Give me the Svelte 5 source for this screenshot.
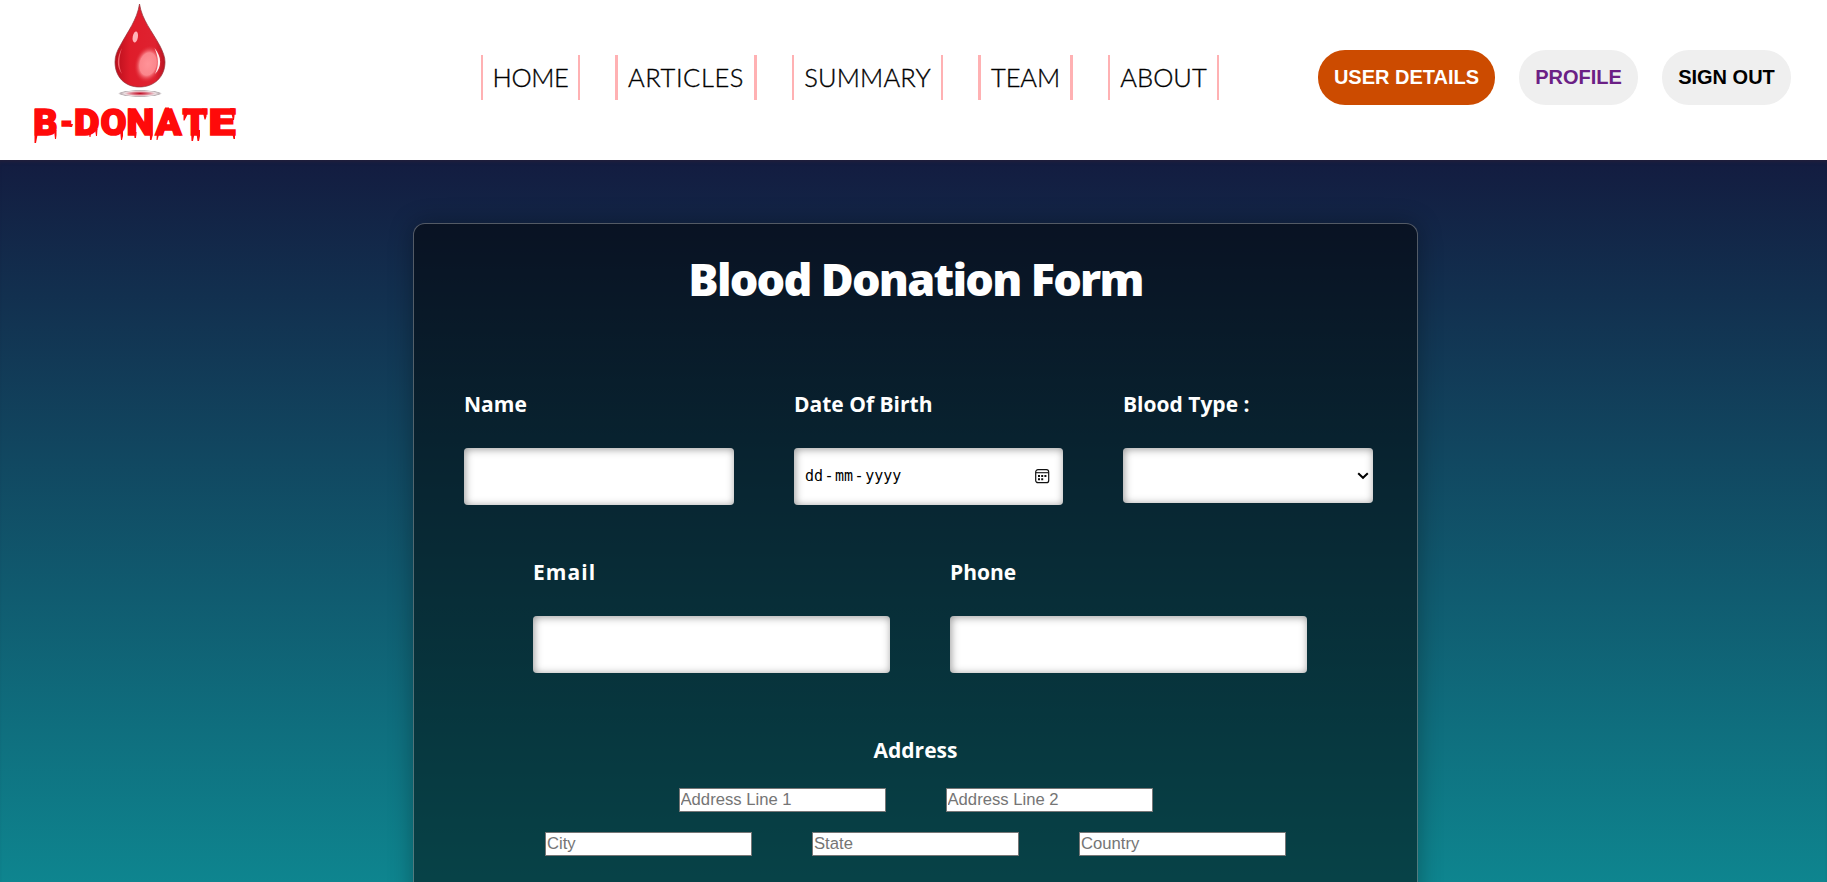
<script>
  const links = [
    { label: 'HOME', width: 99, bar: 2, track: -0.4 },
    { label: 'ARTICLES', width: 142, bar: 3, track: 0.6 },
    { label: 'SUMMARY', width: 151, bar: 2, track: 0.2 },
    { label: 'TEAM', width: 95, bar: 3, track: -0.1 },
    { label: 'ABOUT', width: 111, bar: 2, track: 0 }
  ];

  const letters = [
    { char: 'B', x: 33.5, width: 24 },
    { char: '-', x: 60, width: 13 },
    { char: 'D', x: 74, width: 25.5 },
    { char: 'O', x: 100.5, width: 26 },
    { char: 'N', x: 126.5, width: 27.5 },
    { char: 'A', x: 155.5, width: 26 },
    { char: 'T', x: 182.5, width: 25 },
    { char: 'E', x: 208.5, width: 27 }
  ];
</script>

<header>
  <svg class="logo" width="250" height="160" viewBox="0 0 250 160" role="img" aria-label="B-DONATE">
    <defs>
      <linearGradient id="edge" x1="0" x2="1">
        <stop offset="0" stop-color="#b80f1c" />
        <stop offset=".3" stop-color="#df1c2a" />
        <stop offset=".8" stop-color="#df2230" />
        <stop offset="1" stop-color="#bb1422" />
      </linearGradient>
      <radialGradient id="glow">
        <stop offset="0" stop-color="#ff9398" />
        <stop offset=".6" stop-color="#fb868c" />
        <stop offset="1" stop-color="#e02532" stop-opacity="0" />
      </radialGradient>
      <radialGradient id="pool">
        <stop offset="0" stop-color="#c20d25" />
        <stop offset=".35" stop-color="#d96b7c" />
        <stop offset=".7" stop-color="#eddfe2" />
        <stop offset=".88" stop-color="#b9aeb2" />
        <stop offset="1" stop-color="#fff" />
      </radialGradient>
    </defs>
    <path d="M139.5 4C142 20 152 31 160 46C163 52 165 57 165 62C165 77 154 87 139.500 87C125 87 115 77 115 62C115 56 117 51 120 46C128 31 137 20 139.500 4Z" fill="url(#edge)" stroke="#94333b" stroke-width=".7" />
    <path d="M122 48C117 57 116 66 122 74C118 65 119 57 122 48Z" fill="#f2646d" />
    <ellipse cx="148" cy="64" rx="13.500" ry="19" fill="url(#glow)" transform="rotate(14 148 64)" />
    <path d="M154.500 48C162 57 162 67 155 74C159 66 159 58 154.500 48Z" fill="#fff0f0" />
    <ellipse cx="135.300" cy="37" rx="2.600" ry="5.500" fill="#ffb3b8" transform="rotate(10 135.300 37)" />
    <ellipse cx="140" cy="93.500" rx="22" ry="3.500" fill="url(#pool)" />
    {#each letters as letter}
      <text class="wordmark" x={letter.x} y="134.500" textLength={letter.width} lengthAdjust="spacingAndGlyphs">{letter.char}</text>
    {/each}
    <path class="drips" d="M34.500 109h3v26l-1.500 8h-1.500zM54 130h2.500v5l-.500 4h-1zM68 124h5l-1 3h-2zM89 133h2l-.500 4h-1zM95 129h2.500l-.500 7h-1zM120 130h3v6l-1 4h-1zM128.500 108h2l-.500 4h-1.500zM134 132h2.500l-.500 6h-1.500zM149 108h3.500v28l-1 4h-1.500zM157 131h3l-2.500 9h-1zM165 107.500h4v3h-4zM178 132h3l-.500 4h-1zM183.500 108.500h4v6l-3 6h-1zM202 108.500h4.500v8l-1 3h-1zM191 130h3v6l-1 5h-1.500zM196 130h4v6l-1 5h-1.500zM230 108h4.500v8l-.500 4h-1zM231.500 130h3.500v9h-1.500z" />
  </svg>

  <nav>
    {#each links as link}
      <a href="#{link.label}" style="width:{link.width}px;border-width:0 {link.bar}px;letter-spacing:{link.track}px">{link.label}</a>
    {/each}
  </nav>

  <div class="actions">
    <button class="details">USER DETAILS</button>
    <button class="profile">PROFILE</button>
    <button class="out">SIGN OUT</button>
  </div>
</header>

<main>
  <form>
    <h1>Blood Donation Form</h1>

    <div class="row first">
      <div class="field name">
        <label for="name">Name</label>
        <input id="name" type="text" />
      </div>
      <div class="field dob">
        <span class="label">Date Of Birth</span>
        <div class="box date">
          <span>dd</span><i>-</i><span>mm</span><i>-</i><span>yyyy</span>
          <svg width="16" height="16" viewBox="0 0 16 16">
            <rect x="1.700" y="1.700" width="13" height="13" rx="2.300" fill="none" stroke="#111" stroke-width="1.200" />
            <path d="M2 4.700h12.500" stroke="#111" stroke-width="1.100" />
            <path d="M4 7h2v2H4zM7.200 7h2v2h-2zM10.400 7h2v2h-2zM4 10.200h2v2H4zM7.200 10.200h2v2h-2z" fill="#111" />
          </svg>
        </div>
      </div>
      <div class="field blood">
        <span class="label">Blood Type :</span>
        <div class="box select">
          <svg width="12" height="8" viewBox="0 0 12 8"><path d="M1.200 1.200L6 5.800L10.800 1.200" fill="none" stroke="#000" stroke-width="2" /></svg>
        </div>
      </div>
    </div>

    <div class="row second">
      <div class="field">
        <label for="email" class="email">Email</label>
        <input id="email" type="email" />
      </div>
      <div class="field">
        <label for="phone">Phone</label>
        <input id="phone" type="tel" />
      </div>
    </div>

    <h2>Address</h2>
    <div class="address">
      <input placeholder="Address Line 1" />
      <input placeholder="Address Line 2" />
    </div>
    <div class="address">
      <input placeholder="City" />
      <input placeholder="State" />
      <input placeholder="Country" />
    </div>
  </form>
</main>

<style>
  :global(body) { margin: 0; overflow: hidden; background: #fff; }
  * { box-sizing: border-box; }
  header {
    display: flex;
    height: 160px;
    background: #fff;
    font-family: "Liberation Sans", Arial, sans-serif;
  }
  .logo { flex: none; display: block; }
  .wordmark { font: 900 36px Roboto, sans-serif; fill: #ff0a0a; stroke: #ff0a0a; stroke-width: 1.6px; }
  .drips { fill: #ff0a0a; }
  nav { display: flex; gap: 35px; margin: 55px 0 0 231px; }
  nav a {
    height: 45px;
    flex: none;
    border: solid #ffb1b3;
    color: #000;
    font: 300 25.5px/44px Lato, sans-serif;
    -webkit-text-stroke: 0.35px #000;
    text-align: center;
    text-decoration: none;
    white-space: nowrap;
  }
  .actions { display: flex; gap: 24px; margin: 50px 0 0 99px; }
  button {
    height: 55px;
    flex: none;
    padding: 0 0 1px;
    border: 0;
    border-radius: 27px;
    background: #efefef;
    color: #000;
    font: bold 20px "Liberation Sans", Arial, sans-serif;
    white-space: nowrap;
  }
  .details { width: 177px; background: #cc4b00; color: #fff; }
  .profile { width: 119px; color: #6b2085; }
  .out { width: 129px; }

  main {
    height: 722px;
    padding: 63px 0 0 413px;
    overflow: hidden;
    background: linear-gradient(#131c40, #0e858f);
    box-shadow: inset 0 4px 4px -3px rgba(60, 35, 50, 0.5);
    font-family: "Open Sans", sans-serif;
    color: #fff;
  }
  form {
    width: 1005px;
    height: 800px;
    border: 1px solid rgba(255, 255, 255, 0.3);
    border-radius: 12px;
    background: rgba(0, 0, 0, 0.5);
    box-shadow: 0 0 25px rgba(0, 0, 0, 0.3);
  }
  h1 {
    margin: 24px 0 0;
    height: 62px;
    font-size: 45px;
    line-height: 62px;
    font-weight: 800;
    text-align: center;
    letter-spacing: -1.75px;
    white-space: nowrap;
  }
  .row { display: flex; gap: 60px; }
  .first { margin: 77px 0 0 50px; }
  .second { margin: 50px 0 0 119px; }
  .field { display: flex; flex-direction: column; }
  label, .label {
    height: 61px;
    font-size: 21px;
    line-height: 34px;
    font-weight: 700;
    white-space: nowrap;
  }
  .email { letter-spacing: 1.1px; }
  .name { width: 270px; }
  .dob { width: 269px; }
  .blood { width: 250px; }
  .field input, .box {
    height: 57px;
    border: 0;
    border-radius: 4px;
    background: #fff;
    box-shadow: inset 1px 1px 8px rgba(0, 0, 0, 0.42);
  }
  .second .field { width: 357px; }
  .box { display: flex; align-items: center; color: #000; }
  .date {
    padding: 0 13px 1px 11px;
    font: 15px "DejaVu Sans Mono", monospace;
  }
  .date i { width: 12px; text-align: center; font-style: normal; }
  .date svg { margin-left: auto; }
  .box.select { height: 55px; justify-content: flex-end; padding-right: 4px; }
  h2 {
    margin: 60px 0 0;
    height: 55px;
    font-size: 21px;
    line-height: 34px;
    font-weight: 700;
    text-align: center;
  }
  .address { display: flex; justify-content: center; gap: 60px; height: 44px; }
  .address input {
    width: 207px;
    height: 24px;
    padding: 1px 1px 2px;
    border: 1px solid #767676;
    border-radius: 0;
    background: #fff;
    font: 16.67px "Liberation Sans", Arial, sans-serif;
  }
  .address input::placeholder { color: #757575; }
</style>
